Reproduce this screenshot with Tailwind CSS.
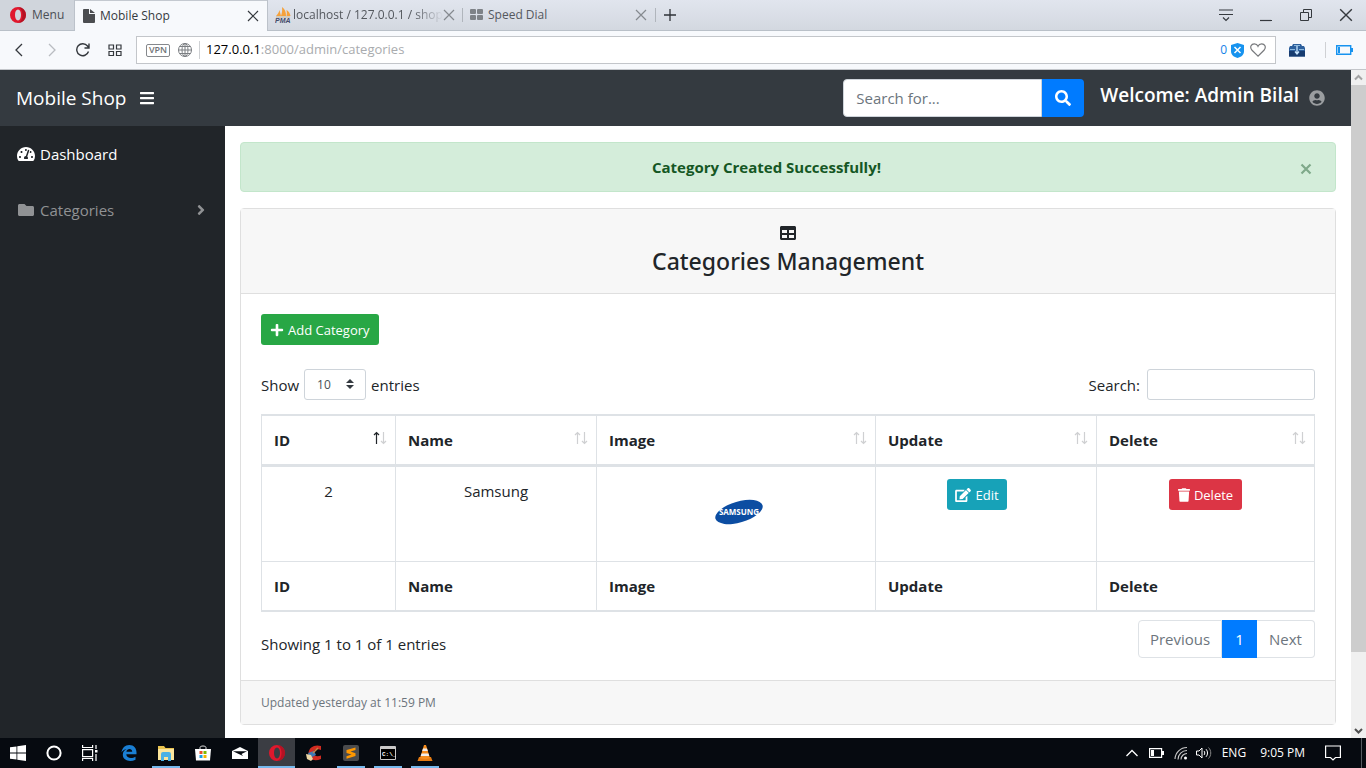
<!DOCTYPE html>
<html lang="en">
<head>
<meta charset="utf-8">
<meta name="viewport" content="width=device-width, initial-scale=1">
<title>Mobile Shop</title>
<script src="https://cdn.jsdelivr.net/npm/@tailwindcss/browser@4"></script>
</head>
<body class="flex h-screen flex-col overflow-hidden bg-white font-['Open_Sans','Noto_Sans',sans-serif] text-[15px] leading-6 text-[#212529]">

<!-- Shared icon shapes -->
<svg class="hidden" aria-hidden="true">
  <symbol id="close" viewBox="0 0 12 12"><path d="M1 1l10 10M11 1L1 11" fill="none" stroke="currentColor" stroke-width="1.2"/></symbol>
  <symbol id="sort" viewBox="0 0 14 14"><path d="M3.5 13V2M1 4l2.500-2.500L6 4" fill="none" stroke="currentColor" stroke-width="1.2"/><path d="M10.500 1v11M8 10l2.500 2.500L13 10" fill="none" stroke="#cfd0d2" stroke-width="1.200"/></symbol>
  <symbol id="opera" viewBox="0 0 16 16"><path fill-rule="evenodd" fill="#e0182d" d="M8 0a8 8 0 1 0 0 16A8 8 0 0 0 8 0zm0 2.600c1.900 0 3 2.400 3 5.400s-1.100 5.400-3 5.400S5 11 5 8s1.100-5.400 3-5.400z"/><path fill="#a3101f" d="M8 0c5 0 8 4 8 8s-3 8-8 8c3-1 4.500-4.500 4.500-8S11 1 8 0z" opacity=".7"/></symbol>
</svg>

<!-- Browser tabs -->
<header class="shrink-0 text-xs">
  <div class="flex h-[31px] items-stretch border-b border-[#b9c0c8] bg-linear-to-b from-[#e1e5ee] to-[#d3d8e0] text-[#54585e]">
    <button class="flex w-[75px] items-center gap-1.5 border-r border-[#bcc2ca] bg-[#d0d5dc] pl-2.5 text-[#4b4f55]"><svg class="size-4"><use href="#opera"/></svg>Menu</button>
    <div class="-mb-px flex w-[192px] items-center border-t border-[#c4c9d0] bg-[#f7f9fc] pr-2 pl-2 text-[#35393e]">
      <svg class="mr-[5px] h-3.5 w-3" viewBox="0 0 12 14" fill="#4b4d50"><path d="M0 1a1 1 0 0 1 1-1h5v5h6v8a1 1 0 0 1-1 1H1a1 1 0 0 1-1-1z"/><path d="M7 0l5 4H7z"/></svg>
      <span class="flex-1">Mobile Shop</span>
      <button aria-label="Close Mobile Shop tab"><svg class="size-3"><use href="#close"/></svg></button>
    </div>
    <div class="flex w-[195px] items-center border-l border-[#bcc2ca] pr-2 pl-[7px]">
      <svg class="mr-0.5 h-4 w-4 shrink-0" viewBox="0 0 16 16"><path fill="#f5a13a" d="M1 9c2-2 3-4 3.500-6L6 9zM6 9c1-3 1.500-6 1-9 3 2 4 5 4 9zM11.500 9c.5-2 .5-4 0-6 2 1 3.500 3 4 6z"/><path d="M1 10h14" stroke="#c9b896"/><text x="0" y="16" font-family="Liberation Sans" font-size="7" font-weight="bold" font-style="italic" fill="#444a6a">PMA</text></svg>
      <span class="flex-1 mask-r-from-80% whitespace-nowrap">localhost / 127.0.0.1 / shop</span>
      <button class="text-[#85898f]" aria-label="Close localhost tab"><svg class="size-3"><use href="#close"/></svg></button>
    </div>
    <div class="my-2 flex w-[194px] items-center border-x border-[#b0b5bc] pr-2 pl-[7px]">
      <svg class="mr-1 h-3 w-3.5" viewBox="0 0 14 12" fill="#7e8287"><rect width="6" height="5" rx="1"/><rect x="7" width="6" height="5" rx="1"/><rect y="6" width="6" height="5" rx="1"/><rect x="7" y="6" width="6" height="5" rx="1"/></svg>
      <span class="flex-1">Speed Dial</span>
      <button class="text-[#85898f]" aria-label="Close Speed Dial tab"><svg class="size-3"><use href="#close"/></svg></button>
    </div>
    <button class="px-2 text-[#2e3237]" aria-label="New tab"><svg class="size-3" viewBox="0 0 12 12"><path d="M6 0v12M0 6h12" stroke="currentColor" stroke-width="1.300"/></svg></button>
    <div class="ml-auto flex items-center gap-[26px] pr-[13px] text-[#35393e]">
      <button aria-label="Tab menu"><svg class="h-3.5 w-3.5" viewBox="0 0 14 14" fill="none" stroke="currentColor" stroke-width="1.200"><path d="M0 2h14M0 6.500h14M4 9.500l3 3 3-3"/></svg></button>
      <button aria-label="Minimize"><svg class="h-3.5 w-3.5" viewBox="0 0 14 14"><path d="M1 12.500h12" stroke="currentColor" stroke-width="1.200"/></svg></button>
      <button aria-label="Restore"><svg class="h-3.5 w-3.5" viewBox="0 0 14 14" fill="none" stroke="currentColor"><path d="M1.500 4.500h8v8h-8zM4.500 4.500v-3h8v8h-3"/></svg></button>
      <button aria-label="Close window"><svg class="h-3.5 w-3.5"><use href="#close"/></svg></button>
    </div>
  </div>

  <!-- Address bar -->
  <div class="flex h-[39px] items-center border-b border-[#c3c6ca] bg-[#f7f9fc]">
    <div class="flex w-[136px] items-center gap-[18px] pl-3 text-[#34383d]">
      <button aria-label="Back"><svg class="size-3.5" viewBox="0 0 14 14" fill="none" stroke="currentColor" stroke-width="1.300"><path d="M10 1L4 7l6 6"/></svg></button>
      <button class="text-[#b9bcc1]" aria-label="Forward"><svg class="size-3.5" viewBox="0 0 14 14" fill="none" stroke="currentColor" stroke-width="1.300"><path d="M5 1l6 6-6 6"/></svg></button>
      <button aria-label="Reload"><svg class="size-3.5" viewBox="0 0 14 14" fill="none" stroke="currentColor" stroke-width="1.400"><path d="M12.500 8.500A6 6 0 1 1 11.500 3L13 5M13 .5V5H8.500"/></svg></button>
      <button aria-label="Speed dial"><svg class="size-3.5" viewBox="0 0 14 14" fill="none" stroke="currentColor" stroke-width="1.200"><path d="M1 2h4.500v4H1zM8.500 2H13v4H8.500zM1 8.500h4.500v4H1zM8.500 8.500H13v4H8.500z"/></svg></button>
    </div>
    <div class="flex h-7 flex-1 items-center border border-[#c3c6ca] bg-white pr-[9px] pl-[9px]">
      <span class="flex h-[13px] w-6 items-center justify-center rounded-xs border border-[#85888c] text-[9px] font-semibold text-[#707377]">VPN</span>
      <svg class="ml-2 size-3.5" viewBox="0 0 14 14" fill="none" stroke="#7b7e82"><circle cx="7" cy="7" r="6.500"/><ellipse cx="7" cy="7" rx="3" ry="6.500"/><path d="M.5 7h13M7 .5v13M1.500 3.500h11M1.500 10.500h11"/></svg>
      <span class="mr-1.5 ml-[7px] h-[18px] w-px bg-[#cfd1d4]"></span>
      <span class="flex-1 text-[13px] text-[#a9abae]"><span class="text-black">127.0.0.1</span>:8000/admin/categories</span>
      <span class="text-[#1583e8]">0</span>
      <svg class="ml-1 h-[15px] w-[13px]" viewBox="0 0 13 15"><path fill="#1793ef" d="M6.500 0L13 2v6c0 4-3 6-6.500 7C3 14 0 12 0 8V2z"/><path d="M3.500 4l6 6M9.500 4l-6 6" stroke="#fff" stroke-width="1.500"/></svg>
      <button class="ml-1.5" aria-label="Bookmark"><svg class="h-3.5 w-4" viewBox="0 0 16 14" fill="none" stroke="#77797c" stroke-width="1.200"><path d="M8 13.200L1.800 7C-.5 4 1.300.8 4.300.8 6 .8 7.400 1.800 8 3.200 8.600 1.800 10 .8 11.700.8c3 0 4.800 3.200 2.500 6.200z"/></svg></button>
    </div>
    <div class="flex w-[90px] items-center pl-[13px]">
      <svg class="h-3.5 w-4" viewBox="0 0 16 14"><path fill="#2c5f9c" d="M4 1h8l1 2h2l1 2v8.500H0V5l1-2h2z"/><path fill="#173c70" d="M0 8h16v5.500H0z"/><path fill="#8db9dd" d="M5 2h6v1H5zM1 6h5v1H1zM10 6h5v1h-5z"/><path d="M8 3v7M6 8.500l2 2.500 2-2.500" fill="none" stroke="#c7e6ff" stroke-width="1.300"/></svg>
      <span class="ml-5 h-4 w-px bg-[#cfd1d4]"></span>
      <svg class="ml-2.5 h-2.5 w-[17px]" viewBox="0 0 17 10"><path d="M.7.7h14v8.600H.700z" fill="none" stroke="#1793ef" stroke-width="1.400"/><path fill="#1793ef" d="M2 2h2v6H2zM15 3h2v4h-2z"/></svg>
    </div>
  </div>
</header>

<div class="flex min-h-0 flex-1">
  <div class="flex min-w-0 flex-1 flex-col">
    <!-- Site navigation -->
    <nav class="flex h-14 shrink-0 items-center bg-[#343a40] pr-[26px] pl-4 text-white">
      <a href="#" class="text-[19px]">Mobile Shop</a>
      <button class="ml-3.5" aria-label="Toggle sidebar"><svg class="h-4 w-3.5 fill-current" viewBox="0 0 448 512"><path d="M16 132h416c9 0 16-7 16-16V76c0-9-7-16-16-16H16C7 60 0 67 0 76v40c0 9 7 16 16 16zm0 160h416c9 0 16-7 16-16v-40c0-9-7-16-16-16H16c-9 0-16 7-16 16v40c0 9 7 16 16 16zm0 160h416c9 0 16-7 16-16v-40c0-9-7-16-16-16H16c-9 0-16 7-16 16v40c0 9 7 16 16 16z"/></svg></button>
      <form class="ml-auto flex h-[38px]">
        <input type="text" aria-label="Search for" placeholder="Search for..." class="w-[199px] rounded-l border border-[#ced4da] bg-white px-3 text-[#495057] placeholder:text-[#6c757d]">
        <button type="button" aria-label="Search" class="flex w-[42px] items-center justify-center rounded-r bg-[#007bff]"><svg class="size-4 fill-current" viewBox="0 0 512 512"><path d="M505 442.700L405.300 343c-4.500-4.500-10.600-7-17-7H372c27.600-35.300 44-79.700 44-128C416 93.100 322.900 0 208 0S0 93.100 0 208s93.100 208 208 208c48.300 0 92.700-16.400 128-44v16.300c0 6.400 2.500 12.500 7 17l99.700 99.700c9.400 9.400 24.600 9.400 33.900 0l28.300-28.300c9.400-9.400 9.400-24.600.1-34zM208 336c-70.700 0-128-57.200-128-128 0-70.700 57.200-128 128-128 70.700 0 128 57.200 128 128 0 70.700-57.200 128-128 128z"/></svg></button>
      </form>
      <h5 class="mb-1.5 ml-4 text-[19px] font-semibold">Welcome: Admin Bilal</h5>
      <a href="#" class="ml-2.5 text-[#9a9da0]" aria-label="Account"><svg class="size-4 fill-current" viewBox="0 0 496 512"><path d="M248 8C111 8 0 119 0 256s111 248 248 248 248-111 248-248S385 8 248 8zm0 96c48.600 0 88 39.400 88 88s-39.400 88-88 88-88-39.400-88-88 39.400-88 88-88zm0 344c-58.700 0-111.300-26.600-146.500-68.200 18.800-35.400 55.600-59.800 98.500-59.800 2.400 0 4.800.4 7.100 1.100 13 4.200 26.600 6.900 40.900 6.900 14.300 0 28-2.700 40.900-6.900 2.300-.7 4.700-1.100 7.100-1.100 42.900 0 79.700 24.400 98.500 59.800C359.300 421.400 306.700 448 248 448z"/></svg></a>
    </nav>

    <div class="flex min-h-0 flex-1">
      <aside class="w-[225px] shrink-0 bg-[#212529]">
        <a href="#" class="flex h-14 items-center gap-[5px] pr-4 pl-[17px] text-white"><svg class="h-4 w-[18px] fill-current" viewBox="0 0 576 512"><path d="M288 32C128.940 32 0 160.940 0 320c0 52.800 14.250 102.260 39.060 144.800 5.610 9.620 16.300 15.200 27.440 15.200h443c11.140 0 21.830-5.580 27.440-15.200C561.750 422.260 576 372.800 576 320c0-159.060-128.940-288-288-288zm0 64c14.710 0 26.580 10.130 30.320 23.650-1.110 2.260-2.640 4.230-3.450 6.670l-9.220 27.670c-5.130 3.490-10.970 6.010-17.640 6.010-17.670 0-32-14.330-32-32S270.330 96 288 96zM96 384c-17.670 0-32-14.330-32-32s14.330-32 32-32 32 14.330 32 32-14.330 32-32 32zm48-160c-17.670 0-32-14.330-32-32s14.330-32 32-32 32 14.330 32 32-14.330 32-32 32zm246.770-72.410l-61.330 184C343.130 347.330 352 364.540 352 384c0 11.720-3.380 22.550-8.880 32H232.880c-5.500-9.450-8.880-20.280-8.880-32 0-33.940 26.500-61.430 59.900-63.590l61.340-184.010c4.170-12.560 17.730-19.450 30.360-15.170 12.570 4.190 19.350 17.790 15.170 30.360zm14.660 57.200l15.520-46.550c3.470-1.290 7.130-2.230 11.050-2.230 17.670 0 32 14.330 32 32s-14.330 32-32 32c-11.380-.01-20.890-6.280-26.570-15.220zM480 384c-17.670 0-32-14.330-32-32s14.330-32 32-32 32 14.330 32 32-14.330 32-32 32z"/></svg>Dashboard</a>
        <a href="#" class="flex h-14 items-center gap-[5px] pr-4 pl-[17px] text-[#909294]"><svg class="h-4 w-[18px] fill-current" viewBox="0 0 512 512"><path d="M464 128H272l-64-64H48C21.490 64 0 85.490 0 112v288c0 26.510 21.490 48 48 48h416c26.510 0 48-21.490 48-48V176c0-26.510-21.490-48-48-48z"/></svg>Categories<svg class="mr-1 ml-auto h-4 w-2 fill-current" viewBox="0 0 256 512"><path d="M224.300 273l-136 136c-9.400 9.400-24.600 9.400-33.900 0l-22.600-22.600c-9.400-9.400-9.400-24.600 0-33.900l96.400-96.400-96.400-96.400c-9.400-9.400-9.400-24.600 0-33.900L54.300 103c9.400-9.400 24.600-9.400 33.900 0l136 136c9.500 9.400 9.500 24.600.1 34z"/></svg></a>
      </aside>

      <main class="min-w-0 flex-1 overflow-hidden px-[15px] pt-4">
        <div role="alert" class="flex h-[50px] items-center rounded border border-[#c3e6cb] bg-[#d4edda] pr-[23px] pl-5 text-[#155724]">
          <strong class="flex-1 pr-7 text-center font-bold text-[#155724]">Category Created Successfully!</strong>
          <button class="text-[#7fa98a]" aria-label="Dismiss"><svg class="mt-1 size-3" viewBox="0 0 12 12"><path d="M1.500 1.500l9 9M10.500 1.500l-9 9" stroke="currentColor" stroke-width="2.200"/></svg></button>
        </div>

        <section class="mt-4 rounded border border-[#dfdfdf]">
          <div class="flex h-[85px] flex-col items-center border-b border-[#dfdfdf] bg-[#f7f7f7] pt-4">
            <svg class="size-4 fill-current" viewBox="0 0 512 512"><path d="M464 32H48C21.490 32 0 53.490 0 80v352c0 26.510 21.490 48 48 48h416c26.510 0 48-21.490 48-48V80c0-26.510-21.490-48-48-48zM224 416H64v-96h160v96zm0-160H64v-96h160v96zm224 160H288v-96h160v96zm0-160H288v-96h160v96z"/></svg>
            <h4 class="mt-1 font-['Noto_Sans',sans-serif] text-[23px] leading-8 font-medium">Categories Management</h4>
          </div>

          <div class="px-5 pt-5 pb-[22px]">
            <button class="flex h-[31px] items-center gap-1 rounded-[3px] bg-[#28a745] px-[9px] text-[13px] text-white"><svg class="h-3.5 w-3.5 fill-current" viewBox="0 0 448 512"><path d="M416 208H272V64c0-17.670-14.330-32-32-32h-32c-17.670 0-32 14.330-32 32v144H32c-17.670 0-32 14.330-32 32v32c0 17.670 14.330 32 32 32h144v144c0 17.670 14.330 32 32 32h32c17.670 0 32-14.330 32-32V304h144c17.670 0 32-14.330 32-32v-32c0-17.670-14.330-32-32-32z"/></svg>Add Category</button>

            <div class="mt-6 flex h-[31px] items-center justify-between">
              <label class="flex items-center gap-[5px]">Show
                <span class="relative">
                  <select class="block h-[31px] w-[62px] appearance-none rounded-[3px] border border-[#ced4da] bg-white pl-3 text-xs text-[#495057]"><option>10</option><option>25</option><option>50</option></select>
                  <svg class="pointer-events-none absolute top-2.5 right-3 h-2.5 w-2" viewBox="0 0 8 10"><path fill="#343a40" d="M4 0L0 4h8zM4 10L0 6h8z"/></svg>
                </span>
                entries</label>
              <label class="flex items-center gap-[7px]">Search:<input type="search" class="h-[31px] w-[168px] rounded-[3px] border border-[#ced4da] bg-white px-2"></label>
            </div>

            <table class="mt-3.5 w-full table-fixed border-separate border-spacing-0 border-t border-l border-[#dee2e6]">
              <colgroup><col class="w-[134px]"><col class="w-[201px]"><col class="w-[279px]"><col class="w-[221px]"><col class="w-[218px]"></colgroup>
              <thead>
                <tr class="h-[52px] text-left [&>th]:border-t [&>th]:border-r [&>th]:border-b-3 [&>th]:border-[#dee2e6] [&>th]:px-3">
                  <th><div class="flex items-center justify-between">ID<svg class="-mr-1 mb-1 size-3.5"><use href="#sort"/></svg></div></th>
                  <th><div class="flex items-center justify-between">Name<svg class="-mr-1 mb-1 size-3.5 text-[#cfd0d2]"><use href="#sort"/></svg></div></th>
                  <th><div class="flex items-center justify-between">Image<svg class="-mr-1 mb-1 size-3.5 text-[#cfd0d2]"><use href="#sort"/></svg></div></th>
                  <th><div class="flex items-center justify-between">Update<svg class="-mr-1 mb-1 size-3.5 text-[#cfd0d2]"><use href="#sort"/></svg></div></th>
                  <th><div class="flex items-center justify-between">Delete<svg class="-mr-1 mb-1 size-3.5 text-[#cfd0d2]"><use href="#sort"/></svg></div></th>
                </tr>
              </thead>
              <tbody>
                <tr class="h-[95px] text-center align-top [&>td]:border-r [&>td]:border-b [&>td]:border-[#dee2e6] [&>td]:p-3">
                  <td>2</td>
                  <td>Samsung</td>
                  <td><div class="pt-5 pl-[5px]"><svg class="mx-auto h-[26px] w-12" viewBox="0 0 48 26" role="img" aria-label="Samsung logo"><ellipse cx="24" cy="13" rx="24.500" ry="10.500" transform="rotate(-16 24 13)" fill="#0c4da2"/><text x="24" y="16" text-anchor="middle" font-family="Open Sans" font-size="8" font-weight="bold" fill="#fff">SAMSUNG</text></svg></div></td>
                  <td><div class="pr-[18px]"><button class="mx-auto flex h-[31px] items-center gap-1 rounded-[3px] bg-[#17a2b8] px-2 text-[13px] text-white"><svg class="h-3.5 w-4 fill-current" viewBox="0 0 576 512"><path d="M402.600 83.200l90.200 90.200c3.800 3.800 3.800 10 0 13.800L274.400 405.600l-92.800 10.300c-12.400 1.400-22.900-9.100-21.500-21.500l10.300-92.800L388.800 83.200c3.800-3.800 10-3.800 13.800 0zm162-22.900l-48.800-48.800c-15.200-15.200-39.900-15.200-55.200 0l-35.400 35.400c-3.800 3.800-3.800 10 0 13.800l90.200 90.200c3.800 3.800 10 3.800 13.800 0l35.400-35.400c15.200-15.300 15.200-40 0-55.200zM384 346.200V448H64V128h229.800c3.200 0 6.200-1.300 8.500-3.500l40-40c7.600-7.600 2.200-20.500-8.500-20.500H48C21.500 64 0 85.500 0 112v352c0 26.500 21.500 48 48 48h352c26.500 0 48-21.500 48-48V306.200c0-10.700-12.900-16-20.500-8.500l-40 40c-2.200 2.300-3.500 5.300-3.500 8.500z"/></svg>Edit</button></div></td>
                  <td><button class="mx-auto flex h-[31px] items-center gap-1 rounded-[3px] bg-[#dc3545] px-[9px] text-[13px] text-white"><svg class="h-3.5 w-3 fill-current" viewBox="0 0 448 512"><path d="M432 32H312l-9.400-18.700A24 24 0 0 0 281.100 0H166.800a23.720 23.720 0 0 0-21.400 13.300L136 32H16A16 16 0 0 0 0 48v32a16 16 0 0 0 16 16h416a16 16 0 0 0 16-16V48a16 16 0 0 0-16-16zM53.200 467a48 48 0 0 0 47.900 45h245.800a48 48 0 0 0 47.900-45L416 128H32z"/></svg>Delete</button></td>
                </tr>
              </tbody>
              <tfoot>
                <tr class="h-[50px] text-left [&>th]:border-r [&>th]:border-b-2 [&>th]:border-[#dee2e6] [&>th]:px-3">
                  <th>ID</th><th>Name</th><th>Image</th><th>Update</th><th>Delete</th>
                </tr>
              </tfoot>
            </table>

            <div class="mt-2 flex items-start justify-between">
              <p class="pt-3">Showing 1 to 1 of 1 entries</p>
              <div class="flex h-[38px] text-[#6c757d]">
                <button class="w-[84px] rounded-l border border-[#dee2e6]">Previous</button>
                <button class="w-[35px] bg-[#007bff] text-white">1</button>
                <button class="w-[58px] rounded-r border border-l-0 border-[#dee2e6]">Next</button>
              </div>
            </div>
          </div>

          <div class="flex h-11 items-center border-t border-[#dfdfdf] bg-[#f7f7f7] px-5 text-xs text-[#6c757d]">Updated yesterday at 11:59 PM</div>
        </section>
      </main>
    </div>
  </div>

  <!-- Page scroll bar -->
  <div class="flex w-[15px] shrink-0 flex-col bg-[#f0f0f0]">
    <svg class="h-[15px] w-full" viewBox="0 0 15 15"><path d="M4 9.500L7.500 6 11 9.500" fill="none" stroke="#a3a3a3" stroke-width="2"/></svg>
    <div class="h-[567px] shrink bg-[#cdcdcd]"></div>
    <svg class="mt-auto h-[15px] w-full" viewBox="0 0 15 15"><path d="M4 6l3.500 3.500L11 6" fill="none" stroke="#505050" stroke-width="2"/></svg>
  </div>
</div>

<!-- Desktop task bar -->
<footer class="flex h-[30px] shrink-0 bg-[#060a10] text-white [&_button]:flex [&_button]:h-full [&_button]:items-center [&_button]:justify-center">
  <div class="flex [&>button]:w-9">
    <button aria-label="Start"><svg class="size-4" viewBox="0 0 16 16" fill="#fff"><path d="M0 2.300l6.500-.9v6.200H0zM7.300 1.300L16 0v7.600H7.300zM0 8.400h6.500v6.200L0 13.700zM7.300 8.400H16V16l-8.700-1.300z"/></svg></button>
    <button aria-label="Cortana"><svg class="size-4" viewBox="0 0 16 16"><circle cx="8" cy="8" r="6.600" fill="none" stroke="#fff" stroke-width="2"/></svg></button>
    <button aria-label="Task view"><svg class="size-4" viewBox="0 0 16 16" fill="none" stroke="#fff" stroke-width="1.200"><path d="M.6 0v2.500h10V0M.6 16v-2.500h10V16M.6 4.600h10v7H.6zM14 0v4M14 9v7"/><path d="M13 5h2.500v2.500H13z" fill="#fff" stroke="none"/></svg></button>
  </div>
  <div class="ml-0.5 flex [&>button]:w-[37px]">
    <button aria-label="Edge"><svg class="size-4" viewBox="0 0 16 16"><path fill="#1a7fd4" d="M.5 7.500C1 3 4 0 8.300 0 13 0 15.500 3.500 15.500 7.500v1.800H5.300c.2 4.200 5.700 4.700 9.200 2.400v3C9 17.500 1.800 15.500 1.800 9.800 1.800 7 3.400 5 5.600 4 3.200 4.300 1.400 5.600.5 7.500zM5.400 6.700h5.800c0-3.800-5.300-3.700-5.800 0z"/></svg></button>
    <button aria-label="File Explorer" class="relative"><svg class="size-4" viewBox="0 0 16 16"><path fill="#e9c34f" d="M0 1h6l1.500 2H16v12H0z"/><path fill="#fbe59b" d="M0 4h16v11H0z"/><path fill="#49b1e4" d="M3 9a2 2 0 0 1 2-2h6a2 2 0 0 1 2 2v7h-3v-4H6v4H3z"/></svg><i class="absolute bottom-0 h-0.5 w-7 bg-[#76b9ed]"></i></button>
    <button aria-label="Store"><svg class="size-4" viewBox="0 0 16 16"><path d="M5 5V2.500C5 .5 11 .5 11 2.500V5" fill="none" stroke="#ddd"/><path fill="#fff" d="M0 4h16l-1 11.500H1z"/><path fill="#e8502b" d="M4.500 6h3v3h-3z"/><path fill="#7fba00" d="M8.500 6h3v3h-3z"/><path fill="#1a9ee6" d="M4.500 10h3v3h-3z"/><path fill="#f5b400" d="M8.500 10h3v3h-3z"/></svg></button>
    <button aria-label="Mail"><svg class="size-4" viewBox="0 0 16 16"><path fill="#fff" d="M0 6l8-4 8 4v8H0z"/><path fill="#060a10" d="M1 6.200h14L9.500 9l1.500 2z"/></svg></button>
    <button aria-label="Opera" class="relative bg-[#3b3d43]"><svg class="size-4"><use href="#opera"/></svg><i class="absolute bottom-0 h-0.5 w-full bg-[#76b9ed]"></i></button>
    <button aria-label="CCleaner"><svg class="size-4" viewBox="0 0 16 16"><path fill="#d22b20" d="M15 1v4c-4-2-8 0-7.500 3.500C8 11 11 12 15 10.500v3.500C8 17 2 14 2.500 8 3 2 9-1 15 1z"/><path fill="#3d79b5" d="M2 8l6-2 2 4-6 3z"/><path fill="#ecd6a5" d="M0 9l5 1 2 4-2 2-4-2z"/><path stroke="#c28445" stroke-width="1.500" d="M7 8l5-5"/></svg></button>
    <button aria-label="Sublime Text" class="relative"><svg class="size-4" viewBox="0 0 16 16"><rect width="16" height="16" rx="2" fill="#4b4c4e"/><path fill="#ff9800" d="M3.500 5L12.500 2.500V5L7.500 6.500l5 1.700v2.800l-9 2.800v-2.600l5-1.700-5-1.500z"/></svg><i class="absolute bottom-0 h-0.5 w-7 bg-[#76b9ed]"></i></button>
    <button aria-label="Command Prompt" class="relative"><svg class="h-3.5 w-4" viewBox="0 0 16 14"><path fill="#000" stroke="#c9c9c9" d="M.5.5h15v13H.5z"/><path fill="#c9c9c9" d="M1 1h14v2H1z"/><text x="2" y="10" font-family="Liberation Mono" font-size="6" font-weight="bold" fill="#fff">C:\_</text></svg><i class="absolute bottom-0 h-0.5 w-7 bg-[#76b9ed]"></i></button>
    <button aria-label="VLC" class="relative"><svg class="size-4" viewBox="0 0 16 16"><path fill="#e57b12" d="M2 12h12l1.500 4H.5z"/><path fill="#f48b1c" d="M7 0h2l4 13c-2 1.500-8 1.500-10 0z"/><path fill="#eee" d="M6 3.500h4l.8 2.500H5.200zM4.500 8.500h7l.8 2.500H3.700z"/></svg><i class="absolute bottom-0 h-0.5 w-7 bg-[#76b9ed]"></i></button>
  </div>
  <div class="ml-auto flex items-center text-xs">
    <button aria-label="Hidden icons"><svg class="h-2 w-3" viewBox="0 0 12 8"><path d="M.5 7L6 1.500 11.500 7" fill="none" stroke="#fff" stroke-width="1.300"/></svg></button>
    <svg class="ml-[11px] h-2.5 w-[15px]" viewBox="0 0 15 10"><path d="M.6.6h12v8.800H.600z" fill="none" stroke="#fff" stroke-width="1.200"/><path fill="#fff" d="M2 2h3v6H2zM13 3h2v4h-2z"/></svg>
    <svg class="ml-2.5 size-3.5" viewBox="0 0 14 14" fill="none" stroke="#ccc" stroke-width="1.100"><path d="M1 13A12 12 0 0 1 13 1.500M4 13.500A9 9 0 0 1 13 4.500M7 13.500a6 6 0 0 1 6-6"/><circle cx="11.500" cy="12" r="1.500" fill="#fff" stroke="none"/></svg>
    <svg class="ml-2 h-3.5 w-4" viewBox="0 0 16 14" fill="none" stroke="#fff"><path d="M.5 5h2.500l3-3v10L3 9H.5zM8 5c1 1 1 3 0 4M10 3.200c2 2 2 5.600 0 7.600"/><path stroke="#888" d="M12.500 1.500c3 3 3 8 0 11"/></svg>
    <span class="ml-2.5">ENG</span>
    <span class="ml-3.5">9:05 PM</span>
    <button class="ml-5" aria-label="Notifications"><svg class="h-4 w-4" viewBox="0 0 16 16" fill="none" stroke="#fff" stroke-width="1.200"><path d="M.6 1h14.800v11.500H10.500L8 15l-2.500-2.500H.6z"/></svg></button>
    <span class="mr-1 ml-5 h-full w-px bg-[#555a60]"></span>
  </div>
</footer>
</body>
</html>
